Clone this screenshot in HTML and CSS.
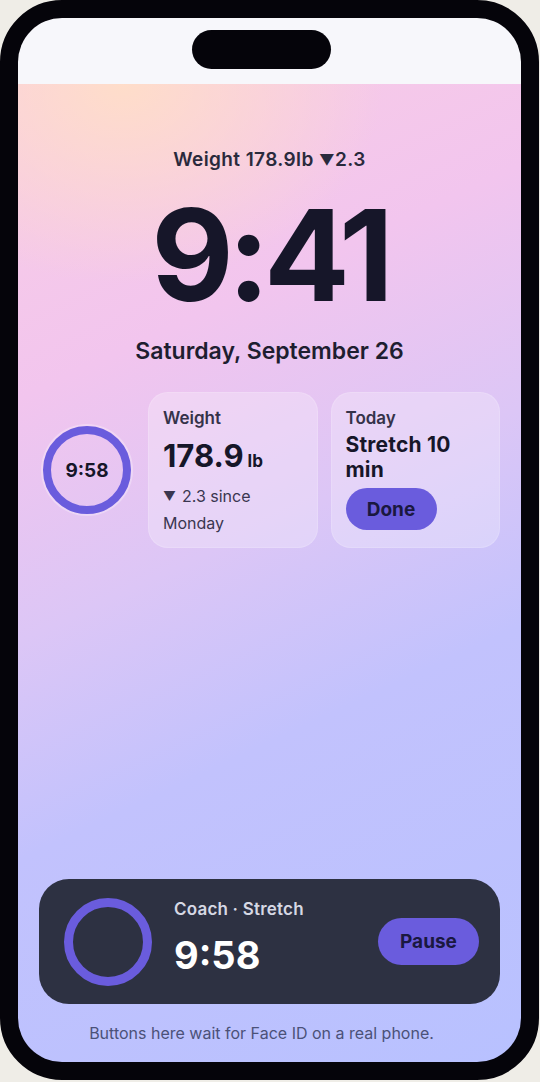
FILE: index.html
```html
<!DOCTYPE html>
<html lang="en">

<head>
    <meta charset="UTF-8">
    <meta name="viewport" content="width=device-width, initial-scale=1.0">
    <title>Lock Screen</title>
    <link rel="stylesheet" href="styles.css">
</head>

<body>
    <div class="phone">
        <div class="screen">
            <!-- Status area with the island -->
            <div class="status">
                <div class="island"></div>
            </div>

            <div class="lock">
                <div class="top">
                    <p class="glance">Weight 178.9lb <span class="tri">▼</span>2.3</p>
                    <h1 class="clock">9:41</h1>
                    <p class="date">Saturday, September 26</p>

                    <!-- Widgets row -->
                    <div class="widgets">
                        <div class="ring">9:58</div>
                        <div class="card">
                            <div class="card-label">Weight</div>
                            <div class="weight-value">178.9<span class="unit">lb</span></div>
                            <div class="weight-note"><span class="tri gap">▼</span>2.3 since<br>Monday</div>
                        </div>
                        <div class="card">
                            <div class="card-label">Today</div>
                            <div class="task">Stretch 10 min</div>
                            <button class="pill done">Done</button>
                        </div>
                    </div>
                </div>

                <div class="bottom">
                    <!-- Live activity -->
                    <div class="activity">
                        <div class="big-ring"></div>
                        <div class="activity-text">
                            <div class="activity-title">Coach · Stretch</div>
                            <div class="activity-time">9:58</div>
                        </div>
                        <button class="pill pause">Pause</button>
                    </div>
                    <p class="hint">Buttons here wait for Face ID on a real phone.</p>
                </div>
            </div>
        </div>
    </div>
</body>

</html>
```

FILE: styles.css
```css
* {
    box-sizing: border-box;
}

body {
    margin: 0;
    background-color: #efede7;
    font-family: Inter, "Noto Sans", sans-serif;
    color: #161629;
}

.phone {
    width: 539px;
    height: 1080px;
    border: 18px solid #05040a;
    border-radius: 62px;
    background: #05040a;
}

.screen {
    height: 100%;
    border-radius: 44px;
    overflow: hidden;
    display: flex;
    flex-direction: column;
}

.status {
    height: 66px;
    flex-shrink: 0;
    background-color: #f7f7fb;
    display: flex;
    justify-content: center;
    padding: 12px 16px 0 0;
}

.island {
    width: 139px;
    height: 39px;
    border-radius: 20px;
    background-color: #05040a;
}

.lock {
    flex: 1;
    display: flex;
    flex-direction: column;
    justify-content: space-between;
    background:
        radial-gradient(ellipse 260px 200px at 105px 0, rgba(255, 222, 200, 0.95), rgba(255, 222, 200, 0)),
        linear-gradient(155deg, #f9cde4 0%, #f2c5ee 26%, #dcc6f6 46%, #c2c2fd 64%, #b8c1ff 100%);
}

.top {
    padding-top: 65px;
    text-align: center;
}

.tri {
    font-size: 0.8em;
    line-height: 1;
    vertical-align: 1px;
}

.tri.gap {
    margin-right: 6px;
}

.glance {
    margin: 0;
    font-size: 19px;
    font-weight: 600;
    line-height: 22px;
    letter-spacing: 0.4px;
    color: #2a2a3c;
}

.clock {
    margin: 29px 0 0;
    font-size: 127px;
    font-weight: 700;
    line-height: 110px;
    letter-spacing: -6px;
}

.date {
    margin: 27px 0 0;
    font-size: 23px;
    font-weight: 600;
    line-height: 28px;
    color: #1e1e30;
}

.widgets {
    display: flex;
    align-items: center;
    gap: 13px;
    margin-top: 27px;
    padding: 0 21px 0 25px;
    text-align: left;
}

.ring {
    width: 88px;
    height: 88px;
    flex-shrink: 0;
    margin-right: 4px;
    border: 8px solid #6a5cdd;
    border-radius: 50%;
    box-shadow: 0 0 0 2px rgba(255, 255, 255, 0.3);
    display: flex;
    align-items: center;
    justify-content: center;
    font-size: 19px;
    font-weight: 700;
}

.card {
    flex: 1;
    height: 156px;
    padding: 15px 16px 15px 14px;
    border-radius: 20px;
    background: rgba(255, 255, 255, 0.26);
    border: 1px solid rgba(255, 255, 255, 0.14);
}

.card-label {
    font-size: 17px;
    font-weight: 600;
    line-height: 20px;
    color: #35324a;
}

.weight-value {
    margin-top: 10px;
    font-size: 31px;
    font-weight: 700;
    line-height: 36px;
}

.unit {
    margin-left: 4px;
    font-size: 17px;
    line-height: 1;
}

.weight-note {
    margin-top: 9px;
    font-size: 16px;
    line-height: 27px;
    color: #3a3650;
}

.task {
    margin-top: 4px;
    font-size: 21px;
    font-weight: 700;
    line-height: 25px;
    letter-spacing: 0.2px;
}

.pill {
    border: none;
    border-radius: 24px;
    background-color: #6a5cdd;
    color: #1a1840;
    font-family: inherit;
    font-weight: 700;
    cursor: pointer;
}

.done {
    margin-top: 6px;
    width: 91px;
    height: 42px;
    font-size: 19px;
}

.bottom {
    padding: 0 21px;
}

.activity {
    display: flex;
    align-items: center;
    height: 125px;
    padding: 0 21px 0 25px;
    border-radius: 30px;
    background-color: #2d3142;
}

.big-ring {
    width: 88px;
    height: 88px;
    flex-shrink: 0;
    border: 9px solid #6a5cdd;
    border-radius: 50%;
}

.activity-text {
    flex: 1;
    margin-left: 22px;
    padding-bottom: 9px;
}

.activity-title {
    font-size: 17px;
    font-weight: 600;
    line-height: 20px;
    letter-spacing: 0.2px;
    color: #d6d8e4;
}

.activity-time {
    margin-top: 15px;
    font-size: 38px;
    font-weight: 700;
    line-height: 42px;
    color: #ffffff;
}

.pause {
    width: 101px;
    height: 47px;
    font-size: 19px;
}

.hint {
    margin: 20px 0;
    padding-right: 16px;
    text-align: center;
    font-size: 16px;
    line-height: 18px;
    color: #4b5178;
}
```
